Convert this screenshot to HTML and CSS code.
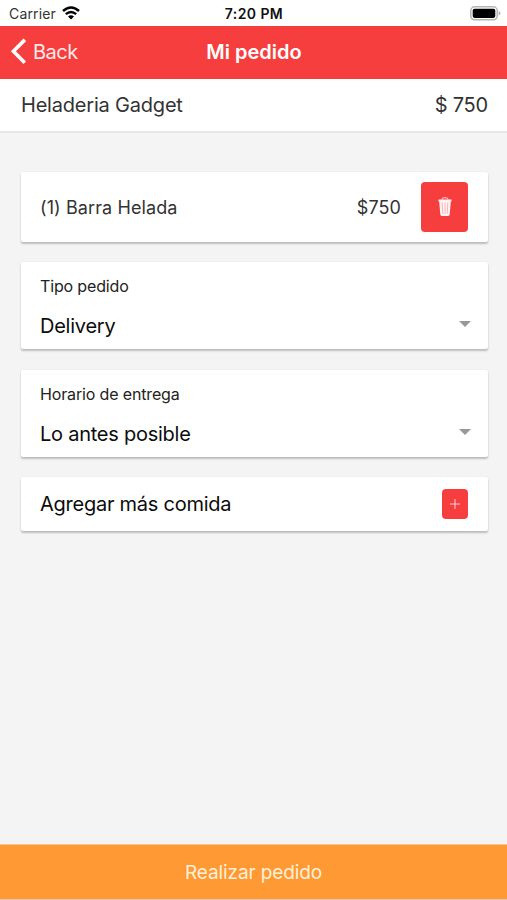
FILE: index.html
```html
<!DOCTYPE html>
<html lang="es">
<head>
    <meta charset="UTF-8">
    <meta name="viewport" content="width=device-width, initial-scale=1.0">
    <title>Mi pedido</title>
    <link rel="stylesheet" href="styles.css">
</head>
<body>
    <div class="status-bar">
        <div class="carrier">
            <span>Carrier</span>
            <svg class="wifi" width="18" height="14" viewBox="0 0 18 14">
                <path d="M1 5 Q9 -2 17 5" fill="none" stroke="#000" stroke-width="2.6"/>
                <path d="M3.8 8.1 Q9 3.7 14.2 8.1" fill="none" stroke="#000" stroke-width="2.4"/>
                <path d="M6 10.4 Q9 8 12 10.4 L9 13.6 Z"/>
            </svg>
        </div>
        <span class="time">7:20 PM</span>
        <svg class="battery" width="31" height="15" viewBox="0 0 31 15">
            <rect x="0.8" y="0.8" width="26.4" height="13" rx="3.8" fill="#fff" stroke="#b5b5b5" stroke-width="1.5"/>
            <rect x="2.7" y="2.7" width="22.6" height="9.2" rx="1.8"/>
            <path d="M28.6 5 Q30.4 5.6 30.4 7.3 Q30.4 9 28.6 9.6 Z" fill="#b5b5b5"/>
        </svg>
    </div>

    <header class="navbar">
        <a class="back" href="#">
            <svg width="16" height="27" viewBox="0 0 16 27">
                <path d="M14.8 1.8 L3.4 13.3 L14.8 24.8" fill="none" stroke="#fff" stroke-width="3.6"/>
            </svg>
            <span>Back</span>
        </a>
        <h1>Mi pedido</h1>
    </header>

    <div class="resumen">
        <span class="local">Heladeria Gadget</span>
        <span class="total">$ 750</span>
    </div>

    <main class="contenido">
        <div class="card producto">
            <span class="nombre">(1) Barra Helada</span>
            <span class="precio">$750</span>
            <button class="btn-borrar" aria-label="Borrar">
                <svg width="14" height="20" viewBox="0 0 14 20">
                    <path d="M4 2.6 Q4 0.8 5.6 0.8 H8.4 Q10 0.8 10 2.6" fill="none" stroke="#fff" stroke-opacity=".8"/>
                    <path d="M0.5 2.4 H13.5 V4.4 H12.8 L11.7 17.6 Q11.5 19 10.2 19 H3.8 Q2.5 19 2.3 17.6 L1.2 4.4 H0.5 Z" fill="#fff" fill-opacity=".94"/>
                    <path d="M4.2 5.5 L4.8 17 M7 5.5 V17 M9.8 5.5 L9.2 17" stroke="#f73e3f" stroke-opacity=".5" stroke-width=".7"/>
                </svg>
            </button>
        </div>

        <div class="card selector">
            <span class="etiqueta">Tipo pedido</span>
            <div class="opcion">
                <span>Delivery</span>
                <i class="flecha"></i>
            </div>
        </div>

        <div class="card selector">
            <span class="etiqueta">Horario de entrega</span>
            <div class="opcion">
                <span>Lo antes posible</span>
                <i class="flecha"></i>
            </div>
        </div>

        <div class="card agregar">
            <span>Agregar más comida</span>
            <button class="btn-agregar" aria-label="Agregar">
                <svg width="10" height="10" viewBox="0 0 10 10">
                    <path d="M5 0 V10 M0 5 H10" stroke="#fff" stroke-opacity=".75"/>
                </svg>
            </button>
        </div>
    </main>

    <button class="btn-pedido">Realizar pedido</button>
</body>
</html>
```

FILE: styles.css
```css
* {
    box-sizing: border-box;
}
body {
    margin: 0;
    height: 900px;
    display: flex;
    flex-direction: column;
    background-color: #f4f4f4;
    font-family: Inter, "Liberation Sans", sans-serif;
    color: #0c0c0c;
    overflow: hidden;
}
button {
    border: none;
    padding: 0;
    font-family: inherit;
    cursor: pointer;
}
svg {
    display: block;
}
.status-bar {
    height: 26px;
    padding: 0 6px 0 9px;
    display: grid;
    grid-template-columns: 1fr auto 1fr;
    align-items: center;
    background-color: #fff;
    font-size: 14px;
}
.carrier {
    display: flex;
    align-items: center;
    gap: 6px;
    color: #333;
    letter-spacing: 0.15px;
}
.time {
    margin-right: 2px;
    font-weight: 600;
    letter-spacing: 0.4px;
    color: #111;
}
.battery {
    justify-self: end;
}
.navbar {
    height: 53px;
    padding: 0 10px;
    display: grid;
    grid-template-columns: 1fr auto 1fr;
    align-items: center;
    background-color: #f73e3f;
    color: #fff;
}
.back {
    padding-bottom: 2px;
    display: flex;
    align-items: center;
    gap: 7px;
    color: #ffe9e9;
    font-size: 20px;
    letter-spacing: -0.5px;
    text-decoration: none;
}
.navbar h1 {
    margin: 0;
    padding: 0 0 2px 1px;
    font-size: 20px;
    font-weight: 600;
}
.resumen {
    height: 54px;
    padding: 0 19px 0 21px;
    display: flex;
    align-items: center;
    justify-content: space-between;
    background-color: #fff;
    border-bottom: 2px solid #e6e6e6;
    color: #333;
    font-size: 20px;
    letter-spacing: -0.2px;
}
.contenido {
    flex: 1;
    padding: 39px 19.5px 0 20.5px;
    display: flex;
    flex-direction: column;
    gap: 20px;
}
.card {
    padding: 0 19.5px;
    background-color: #fff;
    border-radius: 2px;
    box-shadow: 0 2px 2px rgba(0, 0, 0, 0.22), 0 0 2px rgba(0, 0, 0, 0.07);
}
.producto {
    height: 70px;
    display: flex;
    align-items: center;
    color: #333;
    font-size: 18px;
    letter-spacing: 0.1px;
}
.precio {
    margin-left: auto;
    margin-right: 20px;
}
.btn-borrar {
    width: 47px;
    height: 50px;
    margin-bottom: 1px;
    display: flex;
    align-items: center;
    justify-content: center;
    background-color: #f73e3f;
    border-radius: 4px;
}
.selector {
    height: 87px;
    padding-top: 14px;
}
.selector + .selector {
    margin-top: 0.5px;
}
.etiqueta {
    display: block;
    line-height: 20px;
    font-size: 16px;
    letter-spacing: -0.15px;
    color: #222;
}
.opcion {
    margin-top: 16px;
    line-height: 28px;
    display: flex;
    align-items: center;
    justify-content: space-between;
    font-size: 20px;
    letter-spacing: -0.25px;
}
.flecha {
    margin: 0 -3px 4px 0;
    border: 6px solid transparent;
    border-top-color: #989898;
    border-bottom: none;
}
.agregar {
    height: 54px;
    display: flex;
    align-items: center;
    justify-content: space-between;
    font-size: 20px;
    letter-spacing: -0.25px;
}
.btn-agregar {
    width: 26px;
    height: 30px;
    display: flex;
    align-items: center;
    justify-content: center;
    background-color: #f73e3f;
    border-radius: 4px;
}
.btn-pedido {
    height: 56px;
    background-color: #ff9933;
    border-top: 1px solid #f5c493;
    border-bottom: 1px solid #dcc9b8;
    color: #fff0da;
    font-size: 19px;
    letter-spacing: -0.12px;
}
```
